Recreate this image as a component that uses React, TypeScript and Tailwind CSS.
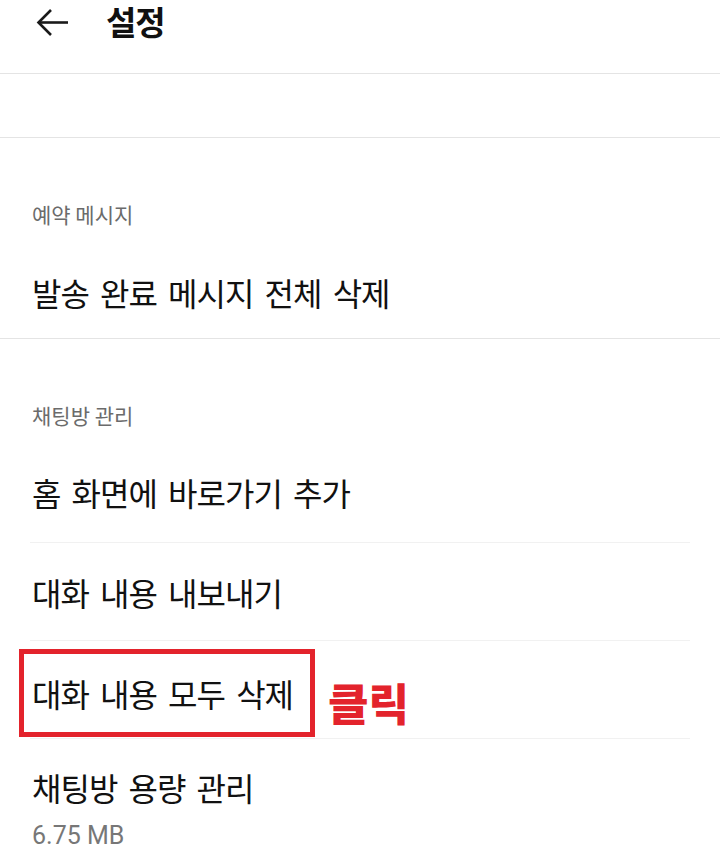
import React from 'react';

const font = { fontFamily: '"Noto Sans CJK KR", "Noto Sans", sans-serif' };
const itemText = 'text-[32px] text-[#111] tracking-[-1px] [word-spacing:5px]';

function Label({ children }: { children: React.ReactNode }) {
  return (
    <div className="px-8 pt-[62px] h-[90px] text-[21px] leading-[28px] text-[#6b6b6b]">
      {children}
    </div>
  );
}

function Item({ children, className = '' }: { children: React.ReactNode; className?: string }) {
  return (
    <div className="px-[30px]">
      <div className={`h-[98px] flex items-center pl-[2px] border-b border-[#f1f1f1] ${itemText} ${className}`}>
        {children}
      </div>
    </div>
  );
}

export default function App() {
  return (
    <div className="w-[720px] h-[852px] bg-white overflow-hidden" style={font}>
      <div className="h-[74px] flex items-start border-b border-[#e4e4e4]">
        <svg className="ml-[36px] mt-[8px]" width="34" height="30" viewBox="0 0 34 30" fill="none" stroke="#1a1a1a" strokeWidth="2.6" strokeLinecap="butt">
          <path d="M3 14.5H32" />
          <path d="M15 2L2.5 14.5L15 27" />
        </svg>
        <div className="ml-[36px] text-[33px] font-bold leading-[42px] text-[#111] tracking-[-1px]">설정</div>
      </div>
      <div className="h-[64px] border-b border-[#e4e4e4]" />

      <Label>예약 메시지</Label>
      <div className={`h-[111px] flex items-center px-8 pt-[18px] border-b border-[#e4e4e4] ${itemText}`}>
        발송 완료 메시지 전체 삭제
      </div>

      <Label>채팅방 관리</Label>
      <Item className="h-[114px] pt-[13px]">홈 화면에 바로가기 추가</Item>
      <Item>대화 내용 내보내기</Item>
      <div className="px-[30px]">
        <div className="h-[98px] flex items-center border-b border-[#f1f1f1]">
          <div className={`ml-[-11px] mt-[6px] h-[88px] w-[296px] border-[5px] border-[#e3232c] flex items-center pl-[8px] ${itemText}`}>
            대화 내용 모두 삭제
          </div>
          <div className="ml-[13px] mt-[24px] text-[44px] font-black text-[#e3232c] leading-none">클릭</div>
        </div>
      </div>
      <div className="px-8 pt-[28px]">
        <div className={`leading-[40px] ${itemText}`}>채팅방 용량 관리</div>
        <div className="mt-[13px] text-[25px] leading-[32px] text-[#777]" style={{ fontFamily: 'Roboto, sans-serif' }}>6.75 MB</div>
      </div>
    </div>
  );
}
